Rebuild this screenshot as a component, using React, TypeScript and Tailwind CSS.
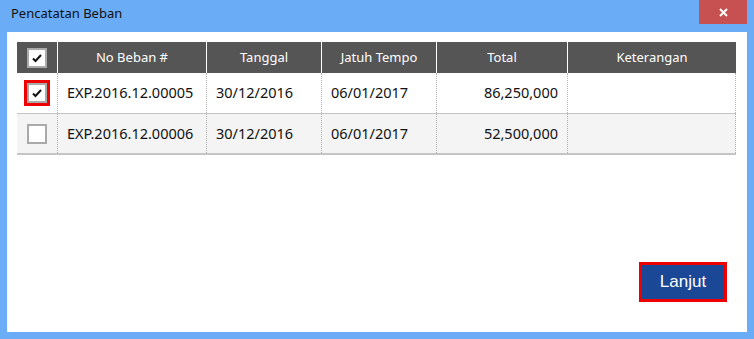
import React from "react";

const Check = () => (
  <svg width="12" height="10" viewBox="0 0 12 10">
    <path d="M2 5.5 L4.5 8 L10 2" stroke="#111" strokeWidth="2" fill="none" />
  </svg>
);

const Box = ({ checked }: { checked?: boolean }) => (
  <div className="w-[20px] h-[20px] border-2 border-[#aaaaaa] bg-white flex items-center justify-center">
    {checked && <Check />}
  </div>
);

const rows = [
  { no: "EXP.2016.12.00005", tgl: "30/12/2016", jt: "06/01/2017", total: "86,250,000", checked: true, bg: "bg-white", b: "border-b" },
  { no: "EXP.2016.12.00006", tgl: "30/12/2016", jt: "06/01/2017", total: "52,500,000", checked: false, bg: "bg-[#f4f4f4]", b: "border-b-2" },
];

export default function App() {
  const font = { fontFamily: '"Noto Sans", "Open Sans", sans-serif' };
  return (
    <div className="w-[754px] h-[339px] bg-[#6aacf6] flex flex-col" style={font}>
      <div className="h-[32px] flex items-start justify-between">
        <div className="pl-[11px] pt-[7px] text-[13px] text-[#111] leading-none">Pencatatan Beban</div>
        <div className="w-[48px] h-[24px] bg-[#c75050] mr-[7px] flex items-center justify-center">
          <svg width="9" height="9" viewBox="0 0 9 9">
            <path d="M1 1 L8 8 M8 1 L1 8" stroke="white" strokeWidth="2" />
          </svg>
        </div>
      </div>
      <div className="flex-1 mx-[7px] mb-[7px] bg-white flex flex-col pl-[10px] pr-[11px] pt-[10px]">
        <div className="grid grid-cols-[40px_149px_115px_115px_131px_169px] h-[31px] bg-[#555555] text-white text-[13px]">
          <div className="flex items-center justify-center"><Box checked /></div>
          <div className="border-l border-white flex items-center justify-center">No Beban #</div>
          <div className="border-l border-white flex items-center justify-center">Tanggal</div>
          <div className="border-l border-white flex items-center justify-center">Jatuh Tempo</div>
          <div className="border-l border-white flex items-center justify-center">Total</div>
          <div className="border-l border-white flex items-center justify-center">Keterangan</div>
        </div>
        {rows.map((r, i) => (
          <div
            key={i}
            className={`grid grid-cols-[40px_149px_115px_115px_131px_169px] h-[41px] ${r.b} border-[#c4c4c4] text-[14.5px] text-[#111] ${r.bg}`}
          >
            <div className="flex items-center justify-center">
              {r.checked ? (
                <div className="border-[3px] border-[#ee0000] flex"><Box checked /></div>
              ) : (
                <Box />
              )}
            </div>
            <div className="border-l border-dotted border-[#b0b0b0] flex items-center pl-[9px]">{r.no}</div>
            <div className="border-l border-dotted border-[#b0b0b0] flex items-center pl-[9px]">{r.tgl}</div>
            <div className="border-l border-dotted border-[#b0b0b0] flex items-center pl-[9px]">{r.jt}</div>
            <div className="border-l border-dotted border-[#b0b0b0] flex items-center justify-end pr-[9px]">{r.total}</div>
            <div className="border-l border-r border-dotted border-[#b0b0b0]"></div>
          </div>
        ))}
        <div className="flex-1" />
        <div className="flex justify-end pr-[9px] pb-[30px]">
          <button
            className="w-[88px] h-[40px] border-[3px] border-[#ee0000] bg-[#1a4796] text-white text-[17px]"
            style={{ fontFamily: '"Liberation Sans", Arial, sans-serif' }}
          >
            Lanjut
          </button>
        </div>
      </div>
    </div>
  );
}
